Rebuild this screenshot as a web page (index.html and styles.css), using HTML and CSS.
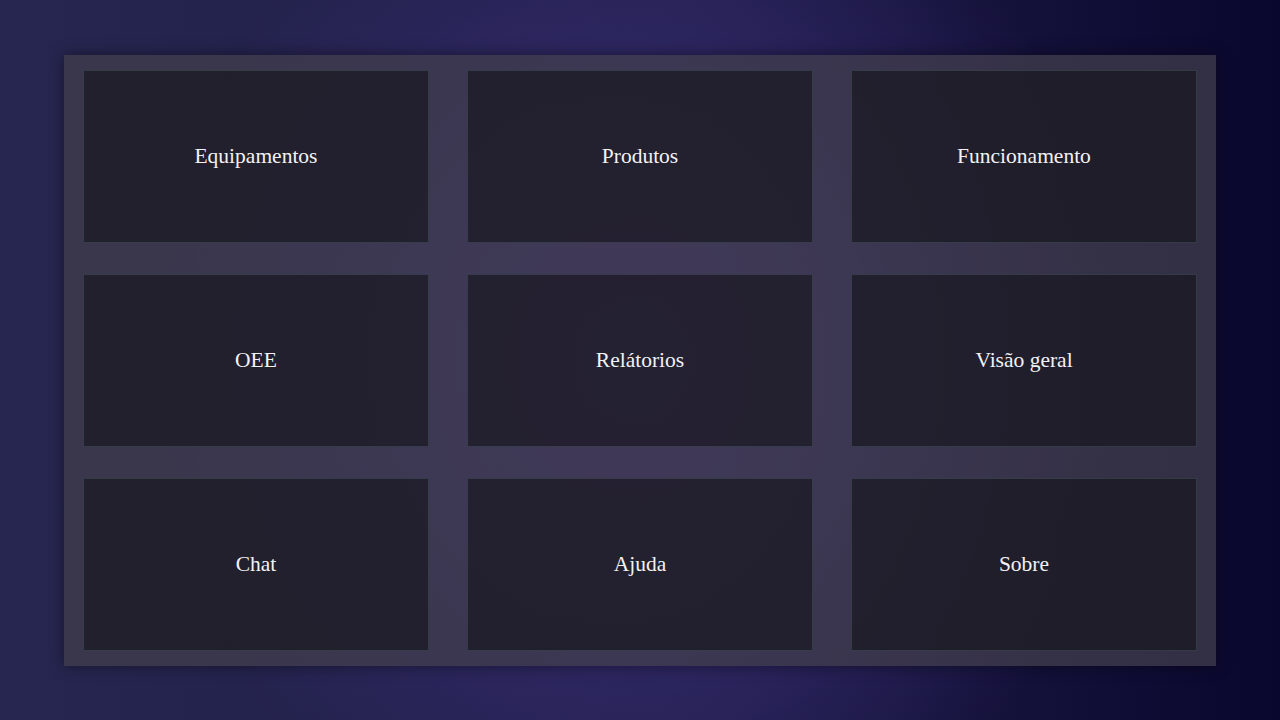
FILE: index.html
```html
<!DOCTYPE html>
<html lang="pt">
<head>
<meta charset="utf-8">
<title>Menu</title>
<link rel="stylesheet" href="styles.css">
</head>
<body>
<main class="panel">
  <div class="card">Equipamentos</div>
  <div class="card">Produtos</div>
  <div class="card">Funcionamento</div>
  <div class="card">OEE</div>
  <div class="card">Relátorios</div>
  <div class="card">Visão geral</div>
  <div class="card">Chat</div>
  <div class="card">Ajuda</div>
  <div class="card">Sobre</div>
</main>
</body>
</html>
```
FILE: styles.css
```css
* { box-sizing: border-box; }
html, body { height: 100%; }
body {
  margin: 0;
  height: 720px;
  display: flex;
  align-items: center;
  justify-content: center;
  font-family: "Liberation Serif", "Times New Roman", serif;
  background:
    radial-gradient(ellipse 38% 75% at 50% 50%, rgba(66,52,135,0.85) 0%, rgba(66,52,135,0) 100%),
    linear-gradient(to right, #272650 0%, #1f1d48 55%, #0a072e 100%);
}
.panel {
  width: 1152px;
  height: 611px;
  padding: 15px 19px;
  display: grid;
  grid-template-columns: repeat(3, 346px);
  grid-template-rows: repeat(3, 173px);
  justify-content: space-between;
  align-content: space-between;
  background: rgba(66, 62, 76, 0.72);
  box-shadow: 0 0 14px rgba(0, 0, 0, 0.45);
}
.card {
  display: flex;
  align-items: center;
  justify-content: center;
  color: #f2f2f4;
  font-size: 21.5px;
  background: rgba(20, 18, 26, 0.62);
  border: 1px solid rgba(95, 115, 125, 0.35);
}
```
